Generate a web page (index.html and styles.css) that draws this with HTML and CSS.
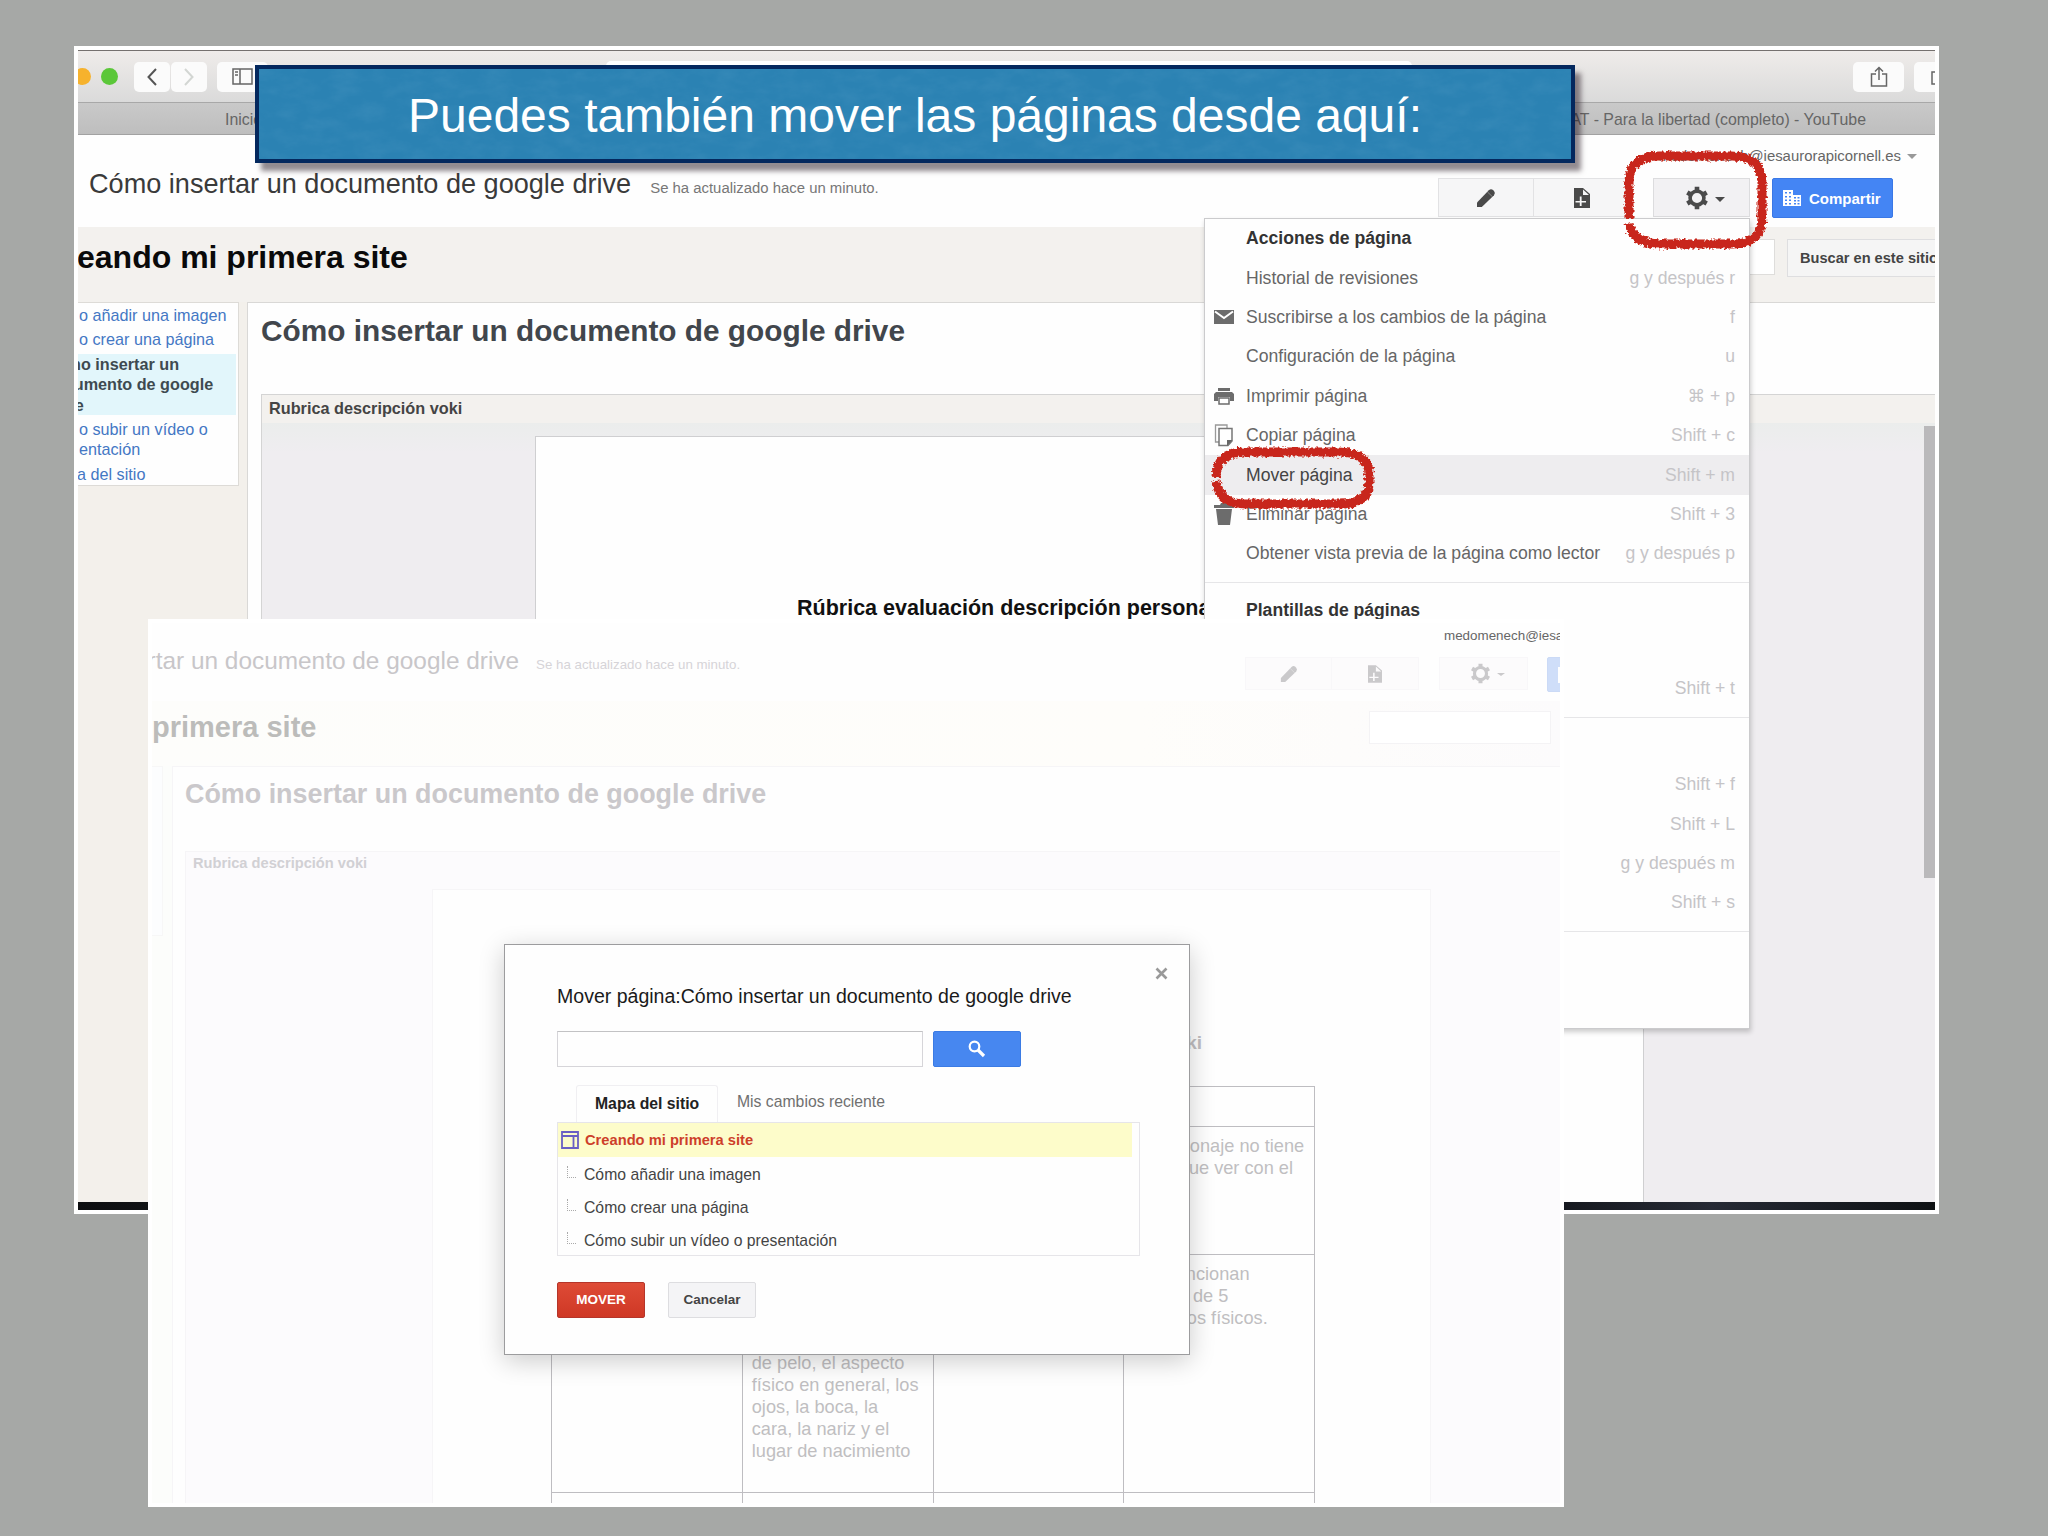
FILE: index.html
```html
<!DOCTYPE html>
<html lang="es">
<head>
    <meta charset="UTF-8">
    <meta name="viewport" content="width=device-width, initial-scale=1.0">
    <title>Mover páginas</title>
    <link rel="stylesheet" href="styles.css">
</head>
<body>
    <!-- shared icons and filters -->
    <svg class="defs" width="0" height="0">
        <filter id="paper" x="0" y="0" width="100%" height="100%">
            <feTurbulence type="fractalNoise" baseFrequency="0.04 0.08" numOctaves="4" seed="4"/>
            <feColorMatrix values="0 0 0 0 0.1  0 0 0 0 0.35  0 0 0 0 0.58  1.4 0 0 0 -0.5"/>
        </filter>
        <filter id="chalk" x="-10%" y="-10%" width="120%" height="120%">
            <feTurbulence type="fractalNoise" baseFrequency="0.35" numOctaves="2" seed="7"/>
            <feDisplacementMap in="SourceGraphic" scale="6" xChannelSelector="R" yChannelSelector="G"/>
        </filter>
        <symbol id="i-pencil" viewBox="0 0 20 20">
            <path d="M1 19v-4.500L12.800 2.200Q15 .3 17 2l1 1q1.800 2 0 4.200L5.800 19z"/>
            <path d="M11.500 4l4.800 4.600" fill="none" stroke="#fff" stroke-opacity=".35"/>
        </symbol>
        <symbol id="i-page" viewBox="0 0 16 20">
            <path fill-rule="evenodd" d="M0 0h9l7 6v14H0zM9 1.500V7h6zM5.800 8.500V13H1.500v1.600h4.300V18h1.800v-3.400H12V13H7.600V8.500z"/>
        </symbol>
        <symbol id="i-gear" viewBox="0 0 24 24">
            <circle cx="12" cy="12" r="6.900" fill="none" stroke="currentColor" stroke-width="3.600"/>
            <path d="M12 .8v4.500M12 18.700v4.500M2.300 6.400l3.900 2.250M17.800 15.350l3.900 2.250M2.300 17.600l3.900-2.250M17.800 8.650l3.900-2.250" stroke="currentColor" stroke-width="4.600"/>
        </symbol>
        <symbol id="i-building" viewBox="0 0 18 16">
            <path fill-rule="evenodd" d="M0 0h10v5h8v11H0zM2 2v1.500h2V2zM6 2v1.500h2V2zM2 6v1.500h2V6zM6 6v1.500h2V6zM2 9.500V11h2V9.500zM6 9.500V11h2V9.500zM2 13v1.500h2V13zM6 13v1.500h2V13zM11 7v1.500h2V7zM14.500 7v1.500h2V7zM11 10v1.500h2V10zM14.500 10v1.500h2V10zM11 13v1.500h2V13zM14.500 13v1.500h2V13z"/>
        </symbol>
    </svg>

    <div class="slide">
        <section class="window">
            <div class="chrome">
                <span class="dot yellow"></span>
                <span class="dot green"></span>
                <span class="nav-btn">
                    <svg width="12" height="18" viewBox="0 0 12 18"><path d="M10 1 2.500 9l7.500 8" fill="none" stroke="#555" stroke-width="2"/></svg>
                </span>
                <span class="nav-btn">
                    <svg width="12" height="18" viewBox="0 0 12 18"><path d="M2 1l7.500 8L2 17" fill="none" stroke="#d3d6d3" stroke-width="2"/></svg>
                </span>
                <span class="nav-btn side-btn">
                    <svg width="21" height="17" viewBox="0 0 21 17"><path d="M1 1h19v15H1zM8 1v15M3 4h3M3 7h3" fill="none" stroke="#666" stroke-width="1.500"/></svg>
                </span>
                <span class="url-bar"></span>
                <span class="nav-btn share-btn">
                    <svg width="18" height="21" viewBox="0 0 18 21"><path d="M6 8H1.500v12h15V8H12M9 14V2M5 5.500l4-4 4 4" fill="none" stroke="#666" stroke-width="1.500"/></svg>
                </span>
                <span class="nav-btn more-btn">
                    <svg width="18" height="16" viewBox="0 0 18 16"><path d="M1 3h13v12H1z" fill="none" stroke="#666" stroke-width="1.500"/></svg>
                </span>
            </div>
            <div class="tabbar">
                <span>Inicio</span>
                <span>AT - Para la libertad (completo) - YouTube</span>
            </div>
            <div class="site-head">
                <div class="doc-name">
                    <h1>Cómo insertar un documento de google drive</h1>
                    <span class="updated">Se ha actualizado hace un minuto.</span>
                </div>
                <div class="head-right">
                    <div class="account">medomenech@iesaurorapicornell.es <i class="caret"></i></div>
                    <div class="tools">
                        <span class="tool"><svg width="20" height="20"><use href="#i-pencil"/></svg></span>
                        <span class="tool"><svg width="16" height="20"><use href="#i-page"/></svg></span>
                        <span class="tool gear"><svg width="24" height="24"><use href="#i-gear"/></svg><i class="caret"></i></span>
                        <span class="share"><svg width="18" height="16"><use href="#i-building"/></svg>Compartir</span>
                    </div>
                </div>
            </div>
            <div class="band">
                <h2>eando mi primera site</h2>
                <div class="search">
                    <span class="search-box"></span>
                    <span class="search-btn">Buscar en este sitio</span>
                </div>
            </div>
            <div class="columns">
                <ul class="sidebar">
                    <li>o añadir una imagen</li>
                    <li>o crear una página</li>
                    <li class="active">Cómo insertar un<br>documento de google<br>drive</li>
                    <li>o subir un vídeo o<br>entación</li>
                    <li class="last">a del sitio</li>
                </ul>
                <div class="main">
                    <h3>Cómo insertar un documento de google drive</h3>
                    <div class="gadget">
                        <div class="gadget-title">Rubrica descripción voki</div>
                        <div class="gadget-body">
                            <div class="paper">Rúbrica evaluación descripción persona</div>
                            <span class="scroll"></span>
                        </div>
                    </div>
                </div>
            </div>
            <div class="dock"></div>
        </section>

        <section class="menu">
            <div class="group">
                <div class="row title">Acciones de página</div>
                <div class="row"><span>Historial de revisiones</span><kbd>g y después r</kbd></div>
                <div class="row">
                    <svg class="icon" width="20" height="14" viewBox="0 0 20 14"><path d="M0 0h20v14H0z" fill="#6c6c6c"/><path d="M1 1.500 10 8l9-6.500" fill="none" stroke="#fff" stroke-width="2"/></svg>
                    <span>Suscribirse a los cambios de la página</span><kbd>f</kbd>
                </div>
                <div class="row"><span>Configuración de la página</span><kbd>u</kbd></div>
                <div class="row">
                    <svg class="icon" width="20" height="17" viewBox="0 0 20 17"><path d="M4 0h12v3H4zM2 4h16l2 2v7h-4V9H4v4H0V6z" fill="#6c6c6c"/><path d="M5 10h10v6H5z" fill="#fff" stroke="#6c6c6c" stroke-width="1.500"/></svg>
                    <span>Imprimir página</span><kbd>⌘ + p</kbd>
                </div>
                <div class="row">
                    <svg class="icon" width="20" height="23" viewBox="0 0 20 23"><path d="M5 18H1.500V1H13v3" fill="none" stroke="#999" stroke-width="1.300"/><path d="M5 4.500h13V17l-4 4.500H5z" fill="#fff" stroke="#777" stroke-width="1.500"/><path d="M18.500 16 13 22v-6z" fill="#666"/></svg>
                    <span>Copiar página</span><kbd>Shift + c</kbd>
                </div>
                <div class="row hover"><span>Mover página</span><kbd>Shift + m</kbd></div>
                <div class="row">
                    <svg class="icon" width="20" height="22" viewBox="0 0 20 22"><path d="M0 2h6l1-2h6l1 2h6v3H0zM2 6h16l-2 16H4z" fill="#6c6c6c"/></svg>
                    <span>Eliminar página</span><kbd>Shift + 3</kbd>
                </div>
                <div class="row"><span>Obtener vista previa de la página como lector</span><kbd>g y después p</kbd></div>
            </div>
            <div class="group">
                <div class="row title">Plantillas de páginas</div>
                <div class="row"></div>
                <div class="row"><kbd>Shift + t</kbd></div>
            </div>
            <div class="group">
                <div class="row"></div>
                <div class="row"><kbd>Shift + f</kbd></div>
                <div class="row"><kbd>Shift + L</kbd></div>
                <div class="row"><kbd>g y después m</kbd></div>
                <div class="row"><kbd>Shift + s</kbd></div>
            </div>
            <div class="group">
                <div class="row"></div>
                <div class="row"></div>
            </div>
        </section>

        <section class="window faded">
            <div class="site-head">
                <div class="doc-name">
                    <h1>Cómo insertar un documento de google drive</h1>
                    <span class="updated">Se ha actualizado hace un minuto.</span>
                </div>
                <div class="head-right">
                    <div class="account">medomenech@iesaurorapicornell.es</div>
                    <div class="tools">
                        <span class="tool"><svg width="18" height="18"><use href="#i-pencil"/></svg></span>
                        <span class="tool"><svg width="14" height="18"><use href="#i-page"/></svg></span>
                        <span class="tool gear"><svg width="21" height="21"><use href="#i-gear"/></svg><i class="caret"></i></span>
                        <span class="share"><svg width="18" height="16"><use href="#i-building"/></svg></span>
                    </div>
                </div>
            </div>
            <div class="band">
                <h2>primera site</h2>
                <span class="search-box"></span>
            </div>
            <div class="columns">
                <div class="sidebar"></div>
                <div class="main">
                    <h3>Cómo insertar un documento de google drive</h3>
                    <div class="gadget">
                        <div class="gadget-title">Rubrica descripción voki</div>
                        <div class="gadget-body">
                            <div class="paper">
                                <p class="paper-title">voki</p>
                                <table class="rubric">
                                    <tr class="r1"><td></td><td></td><td></td><td></td></tr>
                                    <tr class="r2"><td></td><td></td><td></td><td>El personaje no tiene<br>nada que ver con el</td></tr>
                                    <tr class="r3">
                                        <td></td>
                                        <td class="low">de pelo, el aspecto<br>físico en general, los<br>ojos, la boca, la<br>cara, la nariz y el<br>lugar de nacimiento</td>
                                        <td></td>
                                        <td>Se mencionan<br>menos de 5<br>aspectos físicos.</td>
                                    </tr>
                                    <tr class="r4"><td></td><td></td><td></td><td></td></tr>
                                </table>
                            </div>
                        </div>
                    </div>
                </div>
            </div>
        </section>

        <section class="dialog">
            <svg class="close" width="13" height="13" viewBox="0 0 13 13"><path d="M1.500 1.500l10 10M11.500 1.500l-10 10" stroke="#999" stroke-width="2.600"/></svg>
            <h4>Mover página:Cómo insertar un documento de google drive</h4>
            <div class="find">
                <span class="find-box"></span>
                <span class="find-btn">
                    <svg width="18" height="18" viewBox="0 0 18 18"><circle cx="6.500" cy="6.500" r="4.800" fill="none" stroke="#fff" stroke-width="2.200"/><path d="M10 10l6 6" stroke="#fff" stroke-width="3.200"/></svg>
                </span>
            </div>
            <div class="tabs">
                <span class="tab on">Mapa del sitio</span>
                <span class="tab">Mis cambios reciente</span>
            </div>
            <ul class="tree">
                <li class="root">
                    <svg width="18" height="18" viewBox="0 0 18 18"><path d="M1 1h16v16H1zM1 5h16M12.500 5v12" fill="none" stroke="#6a5fc4" stroke-width="1.800"/></svg>
                    Creando mi primera site
                </li>
                <li><i class="branch"></i>Cómo añadir una imagen</li>
                <li><i class="branch"></i>Cómo crear una página</li>
                <li><i class="branch"></i>Cómo subir un vídeo o presentación</li>
            </ul>
            <div class="actions">
                <span class="btn red">MOVER</span>
                <span class="btn">Cancelar</span>
            </div>
        </section>

        <div class="banner">
            <svg class="texture" width="100%" height="100%"><rect width="100%" height="100%" filter="url(#paper)"/></svg>
            <span>Puedes también mover las páginas desde aquí:</span>
        </div>

        <svg class="mark mark-gear" width="150" height="106" viewBox="0 0 150 106">
            <path d="M8 72V36Q8 9 38 9h72Q141 9 141 36v34Q141 97 112 97H40Q12 97 8 77" filter="url(#chalk)"/>
        </svg>
        <svg class="mark mark-item" width="170" height="68" viewBox="0 0 170 68">
            <path d="M8 33Q9 8 36 8h94Q161 8 161 30v8Q161 60 132 60H38Q11 60 8 37" filter="url(#chalk)"/>
        </svg>
    </div>
</body>
</html>
```
FILE: styles.css
```css
* {
    box-sizing: border-box;
}
body {
    margin: 0;
    font-family: "Liberation Sans", Arial, sans-serif;
    background-color: #a6a8a6;
}
h1, h2, h3, h4, p, ul {
    margin: 0;
    padding: 0;
}
ul {
    list-style: none;
}
svg {
    display: block;
    flex: none;
}
.defs {
    position: absolute;
}
.slide {
    position: relative;
    width: 2048px;
    height: 1536px;
    overflow: hidden;
    white-space: nowrap;
}

/* browser window */
.window {
    position: absolute;
    left: 74px;
    top: 46px;
    width: 1865px;
    height: 1168px;
    border: 4px solid #fff;
    background: #fdfdfd;
    overflow: hidden;
    display: flex;
    flex-direction: column;
}
.chrome {
    display: flex;
    align-items: center;
    flex: none;
    height: 53px;
    border-top: 1px solid #75716f;
    border-bottom: 1px solid #a8a8a8;
    background: linear-gradient(#efecea, #dadada);
}
.dot {
    width: 17px;
    height: 17px;
    border-radius: 50%;
    flex: none;
}
.yellow {
    background: #f6b22d;
    margin-left: -4px;
}
.green {
    background: #5bc739;
    margin: 0 16px 0 10px;
}
.nav-btn {
    display: flex;
    align-items: center;
    justify-content: center;
    flex: none;
    width: 36px;
    height: 30px;
    margin-right: 1px;
    border-radius: 5px;
    background: #fbfbfb;
}
.side-btn {
    width: 51px;
    margin-left: 9px;
    justify-content: flex-start;
    padding-left: 15px;
}
.url-bar {
    width: 806px;
    height: 31px;
    margin-left: 337px;
    border-radius: 5px;
    background: #fff;
}
.share-btn {
    width: 51px;
    margin-left: auto;
    margin-right: 10px;
}
.more-btn {
    width: 51px;
    margin-right: -30px;
    justify-content: flex-start;
    padding-left: 17px;
}
.tabbar {
    display: flex;
    justify-content: space-between;
    flex: none;
    height: 32px;
    padding: 0 69px 0 147px;
    border-bottom: 1px solid #a2a2a2;
    background: linear-gradient(#c9c9c9, #bebebe);
    color: #666;
    font-size: 15.9px;
    line-height: 33px;
}
.site-head {
    display: flex;
    justify-content: space-between;
    flex: none;
    height: 92px;
    background: #fefefe;
}
.doc-name {
    display: flex;
    align-items: baseline;
    gap: 19px;
    padding: 34px 0 0 11px;
}
.doc-name h1 {
    font-size: 27.1px;
    line-height: 30px;
    font-weight: normal;
    color: #3a3a3a;
}
.updated {
    font-size: 14.9px;
    color: #777;
}
.head-right {
    display: flex;
    flex-direction: column;
    align-items: flex-end;
    padding-top: 11px;
}
.account {
    display: flex;
    align-items: center;
    gap: 6px;
    margin-right: 18px;
    font-size: 14.9px;
    line-height: 20px;
    color: #666;
}
.caret {
    border: 5px solid transparent;
    border-top-color: currentColor;
    border-bottom: 0;
}
.account .caret {
    color: #999;
}
.tools {
    display: flex;
    margin: 12px 42px 0 0;
}
.tool {
    display: flex;
    align-items: center;
    justify-content: center;
    width: 96px;
    height: 39px;
    border: 1px solid #e2e2e4;
    background: #f6f6f7;
    color: #4a4a4a;
    fill: #4a4a4a;
}
.tool + .tool {
    border-left: 0;
}
.tools .gear {
    width: 97px;
    margin: 0 22px 0 23px;
    padding-left: 7px;
    gap: 6px;
    border: 1px solid #dcdcde;
    background: #f2f1f3;
}
.gear .caret {
    margin-top: 3px;
}
.share {
    display: flex;
    align-items: center;
    width: 121px;
    height: 40px;
    padding-left: 10px;
    gap: 8px;
    border: 1px solid #3a78e6;
    border-radius: 2px;
    background: #4485f4;
    fill: #fff;
    color: #fff;
    font-size: 15px;
    font-weight: bold;
}
.band {
    display: flex;
    justify-content: space-between;
    flex: none;
    height: 75px;
    background: #f3f1ee;
}
.band h2 {
    margin: 12px 0 0 -1px;
    font-size: 32px;
    line-height: 36px;
    color: #0a0a0a;
}
.search {
    display: flex;
    gap: 12px;
    width: 410px;
    margin-top: 12px;
    flex: none;
}
.search-box {
    flex: none;
    width: 250px;
    height: 36px;
    border: 1px solid #dedddb;
    background: #fff;
}
.search-btn {
    flex: none;
    width: 180px;
    height: 38px;
    padding-left: 12px;
    border: 1px solid #dedee0;
    background: #f5f5f5;
    color: #444;
    font-size: 14.6px;
    font-weight: bold;
    line-height: 36px;
}
.columns {
    display: flex;
    flex: 1;
    gap: 8px;
    min-height: 0;
    background: #f3f0eb;
}
.sidebar {
    flex: none;
    align-self: flex-start;
    width: 161px;
    height: 184px;
    padding-top: 2px;
    border: 1px solid #dddbd7;
    border-left: 0;
    background: #fefefe;
    font-size: 16.2px;
    line-height: 20.4px;
    color: #4477c4;
}
.sidebar li {
    margin: 0 2px 4px 1px;
}
.sidebar .active {
    margin-left: -33px;
    background: #e2f6fb;
    color: #3e4a50;
    font-weight: bold;
}
.sidebar .last {
    margin-left: -1px;
}
.main {
    display: flex;
    flex-direction: column;
    flex: 1;
    padding-left: 13px;
    border: 1px solid #d9d8d6;
    border-width: 1px 0 0 1px;
    background: #fefefe;
}
.main h3 {
    flex: none;
    height: 91px;
    padding-top: 11px;
    font-size: 29.8px;
    line-height: 34px;
    color: #41464c;
}
.gadget {
    display: flex;
    flex-direction: column;
    flex: 1;
    border: 1px solid #d4d4d4;
    border-width: 1px 0 0 1px;
}
.gadget-title {
    flex: none;
    height: 28px;
    padding-left: 7px;
    background: #f3f1ee;
    color: #444;
    font-size: 16.25px;
    font-weight: bold;
    line-height: 27px;
}
.gadget-body {
    display: flex;
    flex: 1;
    justify-content: space-between;
    align-items: flex-start;
    padding: 13px 0 0 273px;
    background: linear-gradient(#ebedec, #efedf0 30px);
}
.paper {
    align-self: stretch;
    width: 1109px;
    padding: 158px 0 0 261px;
    border: 1px solid #cfcfd1;
    border-bottom: 0;
    background: #fefefe;
    color: #111;
    font-size: 21.5px;
    font-weight: bold;
    line-height: 26px;
}
.scroll {
    width: 11px;
    height: 452px;
    margin-top: -10px;
    background: #bab9bb;
}
.dock {
    flex: none;
    height: 8px;
    background: linear-gradient(90deg, #0d0e10, #1d2023 20%, #0c0e12 75%, #262a35 88%, #0e1114);
}

/* page actions menu */
.menu {
    position: absolute;
    left: 1204px;
    top: 218px;
    width: 546px;
    height: 811px;
    border: 1px solid #cbcbcd;
    background: #fefefe;
    box-shadow: 1px 3px 5px rgba(0, 0, 0, 0.2);
    font-size: 17.6px;
}
.group {
    padding-bottom: 8px;
}
.group + .group {
    padding-top: 8px;
    border-top: 1px solid #e6e6e8;
}
.row {
    position: relative;
    display: flex;
    align-items: center;
    height: 39.4px;
    padding: 0 14px 0 41px;
    color: #666;
}
.row .icon {
    position: absolute;
    left: 9px;
}
.row kbd {
    margin-left: auto;
    font-family: "Liberation Sans", "DejaVu Sans", sans-serif;
    color: #c5c4c7;
}
.title {
    font-weight: bold;
    color: #333;
}
.hover {
    background: #eeedef;
    color: #444;
}

/* second capture, washed out behind the dialog */
.faded {
    left: 148px;
    top: 619px;
    width: 1416px;
    height: 888px;
}
.faded .site-head {
    height: 78px;
}
.faded .doc-name {
    gap: 17px;
    padding: 23px 0 0;
    margin-left: -121px;
}
.faded h1 {
    font-size: 24.4px;
    color: #c8c6c9;
}
.faded .updated {
    font-size: 13.3px;
    color: #d6d4d8;
}
.faded .head-right {
    align-items: flex-start;
    flex: none;
    width: 315px;
    padding-top: 4px;
}
.faded .account {
    margin-left: 199px;
    font-size: 13.4px;
    line-height: 18px;
}
.faded .tools {
    margin-top: 12px;
}
.faded .tool,
.faded .tools .gear {
    width: 87px;
    height: 33px;
    border-color: #f8f7f9;
    background: #fcfbfc;
    fill: #cac9cb;
    color: #cac9cb;
}
.faded .tools .gear {
    width: 89px;
    margin: 0 19px 0 20px;
}
.faded .gear .caret {
    margin-top: 1px;
    border-width: 3px 4px 0;
}
.faded .share {
    height: 35px;
    border-color: #cbdaf6;
    background: #cfdef9;
}
.faded .band {
    height: 65px;
    background: linear-gradient(90deg, #fdfdfb, #fefdfa 70%, #fcfbfc);
}
.faded .band h2 {
    margin: 10px 0 0;
    font-size: 29px;
    line-height: 32px;
    color: #bcbcba;
}
.faded .search-box {
    width: 182px;
    height: 33px;
    margin: 10px 9px 0 0;
    border-color: #f4f3f5;
}
.faded .columns {
    gap: 9px;
    background: #fcfdfb;
}
.faded .sidebar {
    width: 11px;
    height: 170px;
    border-color: #f7f7f7;
    background: #fcfdfe;
}
.faded .main {
    padding-left: 12px;
    border-color: #f6f5f7;
}
.faded h3 {
    height: 84px;
    padding-top: 10px;
    font-size: 26.9px;
    color: #cac8cb;
}
.faded .gadget {
    border-color: #f6f5f7;
}
.faded .gadget-title {
    height: 25px;
    background: #fcfbfd;
    padding-left: 7px;
    color: #d1d0d4;
    font-size: 14.65px;
    line-height: 23px;
}
.faded .gadget-body {
    padding: 12px 0 0 246px;
    background: #fcfbfd;
}
.faded .paper {
    width: 999px;
    padding: 0 0 0 118px;
    border-color: #f6f5f7;
    color: #c0bec1;
    font-size: 18.2px;
    font-weight: normal;
    line-height: 22px;
}
.paper-title {
    width: 651px;
    height: 54px;
    margin-top: 142px;
    text-align: right;
    font-size: 19px;
    font-weight: bold;
}
.rubric {
    width: 764px;
    table-layout: fixed;
    border-collapse: collapse;
}
.rubric td {
    padding: 8px 8px 0 9px;
    border: 1px solid #bebdc1;
    vertical-align: top;
}
.rubric .low {
    vertical-align: bottom;
    padding-bottom: 30px;
}
.r1 { height: 40px; }
.r2 { height: 128px; }
.r3 { height: 238px; }
.r4 { height: 60px; }

/* move page dialog */
.dialog {
    position: absolute;
    left: 504px;
    top: 944px;
    width: 686px;
    height: 411px;
    padding: 39px 49px 0 52px;
    border: 1px solid #9c9c9e;
    background: #fefefe;
    box-shadow: 0 6px 24px rgba(0, 0, 0, 0.2);
    font-size: 15.75px;
}
.close {
    position: absolute;
    right: 21px;
    top: 22px;
}
.dialog h4 {
    font-size: 19.55px;
    font-weight: normal;
    line-height: 24px;
    color: #1a1a1a;
}
.find {
    display: flex;
    gap: 10px;
    margin-top: 23px;
}
.find-box {
    width: 366px;
    height: 36px;
    border: 1px solid #d6d5d9;
    border-top-color: #c2c2c4;
}
.find-btn {
    display: flex;
    align-items: center;
    justify-content: center;
    width: 88px;
    height: 36px;
    border: 1px solid #3b7be4;
    border-radius: 2px;
    background: #4787f0;
}
.tabs {
    display: flex;
    margin: 18px 0 0 19px;
    height: 37px;
}
.tab {
    padding: 0 19px;
    color: #707070;
    line-height: 33px;
}
.on {
    width: 142px;
    padding: 0 0 0 18px;
    border: 1px solid #f0eff2;
    border-bottom: 0;
    border-radius: 3px 3px 0 0;
    color: #222;
    font-weight: bold;
    line-height: 35px;
}
.tree {
    height: 134px;
    border: 1px solid #e6e5e9;
    color: #444;
}
.tree li {
    display: flex;
    align-items: center;
    height: 33px;
    padding-left: 9px;
}
.tree .root {
    height: 34px;
    margin: 0 7px 1px 0;
    padding-left: 3px;
    gap: 6px;
    background: #fdfcca;
    color: #cd3f2a;
    font-size: 14.7px;
    font-weight: bold;
}
.branch {
    width: 9px;
    height: 12px;
    margin: -6px 8px 0 0;
    border: 1px dotted #aaa;
    border-width: 0 0 1px 1px;
}
.actions {
    display: flex;
    gap: 23px;
    margin-top: 26px;
}
.btn {
    width: 88px;
    height: 36px;
    border: 1px solid #dddde0;
    border-radius: 2px;
    background: #f4f4f6;
    color: #444;
    font-size: 13.5px;
    font-weight: bold;
    line-height: 34px;
    text-align: center;
}
.red {
    border-color: #b5352a;
    background: linear-gradient(#de4b36, #cf3825);
    color: #fff;
}

.banner {
    position: absolute;
    left: 255px;
    top: 65px;
    width: 1320px;
    height: 98px;
    border: 4px solid #04285e;
    background: #2b82b3;
    box-shadow: 6px 8px 5px rgba(40, 25, 35, 0.5);
    color: #fff;
    font-size: 48px;
    line-height: 94px;
    text-align: center;
}
.texture {
    position: absolute;
    left: 0;
    top: 0;
    opacity: 0.28;
}
.banner span {
    position: relative;
}

/* hand-drawn red marks */
.mark {
    position: absolute;
}
.mark path {
    fill: none;
    stroke: #c8261a;
    stroke-width: 9;
}
.mark-gear {
    left: 1621px;
    top: 147px;
}
.mark-item {
    left: 1208px;
    top: 444px;
}
```
